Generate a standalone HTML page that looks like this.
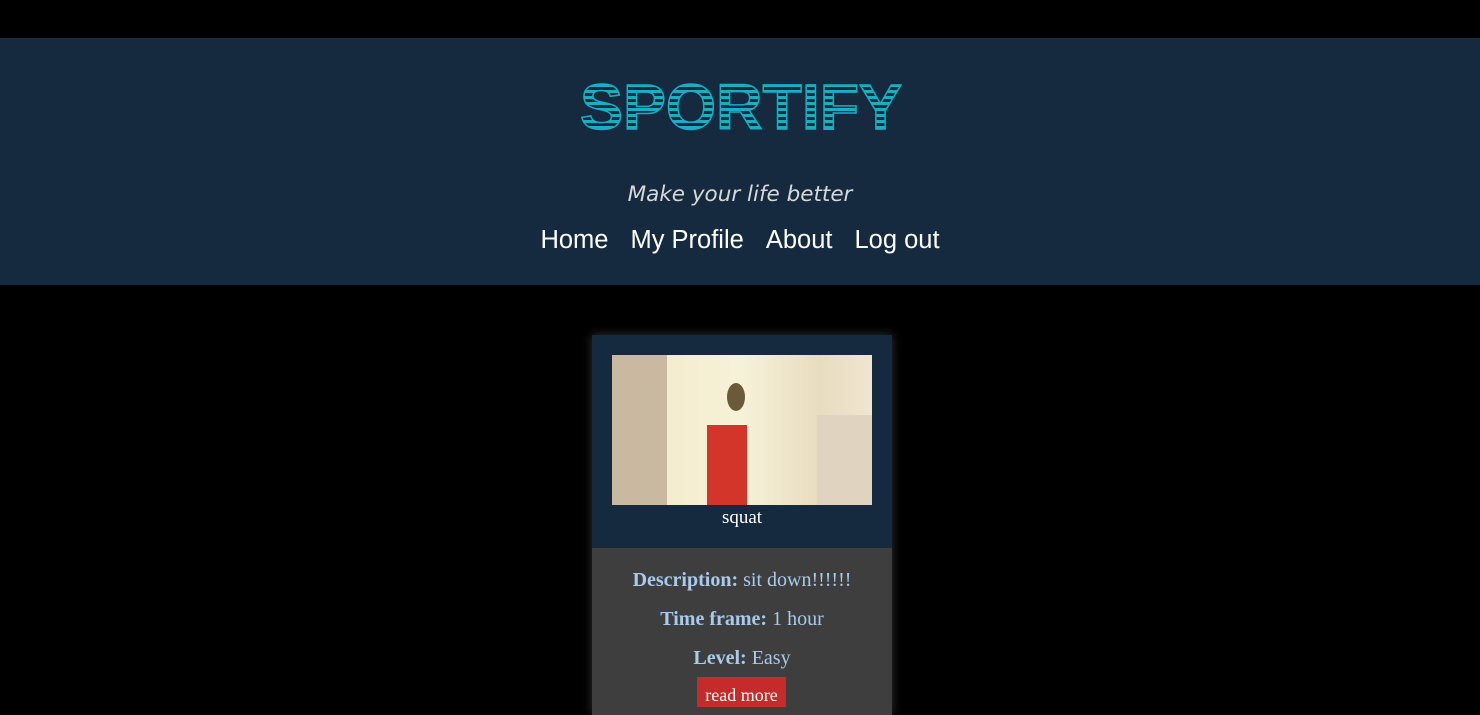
<!DOCTYPE html>
<html><head><style>
body{margin:0;background:#000;width:1480px;height:703px;overflow:hidden;font-family:"Liberation Serif",serif}
.hd{position:absolute;top:38px;left:0;width:1480px;height:247px;background:#152a3f}
.tag{position:absolute;width:100%;text-align:center;color:#d8d8d8;font:italic 21.5px "DejaVu Sans","Liberation Sans",sans-serif}
.nav{position:absolute;width:100%;text-align:center;font:25.5px "Liberation Sans",sans-serif;color:#fff}
.nav span{margin:0 11px}
.card{position:absolute;left:592px;top:335px;width:300px;height:380px;background:#3e3e3e;box-shadow:0 0 10px rgba(80,80,80,.6)}
.top{height:213px;background:#152a3f;text-align:center}
.img{position:absolute;left:20px;top:20px;width:260px;height:150px;background:linear-gradient(90deg,#d9ccb0 0%,#f4eccf 20%,#f6f2d8 50%,#e8dcc0 80%,#f0e6d0 100%)}
.t{position:absolute;top:172px;width:100%;text-align:center;color:#fff;font-size:19px}
.info{text-align:center;color:#a9cbeb;font-size:20px}
.info p{margin:0;height:39px;line-height:39px}
.btn{position:absolute;left:105px;top:342px;width:89px;height:30px;background:#c62b2b;color:#fff;font-size:18px;text-align:center;line-height:36px}
</style></head><body>
<div class="hd">
<svg style="position:absolute;left:578px;top:34px" width="330" height="62">
<defs><pattern id="st" width="6" height="6" patternUnits="userSpaceOnUse"><rect width="6" height="3" fill="#19aec4"/></pattern></defs>
<text x="2" y="57" font-family="Liberation Sans" font-weight="bold" font-size="64" textLength="322" lengthAdjust="spacingAndGlyphs" fill="none" stroke="#19aec4" stroke-width="1.5">SPORTIFY</text>
<text x="2" y="57" font-family="Liberation Sans" font-weight="bold" font-size="64" textLength="322" lengthAdjust="spacingAndGlyphs" fill="url(#st)">SPORTIFY</text>
</svg>
<div class="tag" style="top:144px">Make your life better</div>
<div class="nav" style="top:188px"><span>Home</span><span>My Profile</span><span>About</span><span>Log out</span></div>
</div>
<div class="card">
<div class="top">
<div class="img">
<div style="position:absolute;left:0;top:0;width:55px;height:150px;background:#c9b9a0"></div>
<div style="position:absolute;left:95px;top:70px;width:40px;height:80px;background:#d2352a"></div>
<div style="position:absolute;left:115px;top:28px;width:18px;height:28px;border-radius:50%;background:#6b5a3a"></div>
<div style="position:absolute;left:205px;top:60px;width:55px;height:90px;background:#e0d4c0"></div>
</div>
<div class="t">squat</div>
</div>
<div class="info" style="padding-top:13px">
<p><b>Description:</b> sit down!!!!!!</p>
<p><b>Time frame:</b> 1 hour</p>
<p><b>Level:</b> Easy</p>
</div>
<div class="btn">read more</div>
</div>
</body></html>
